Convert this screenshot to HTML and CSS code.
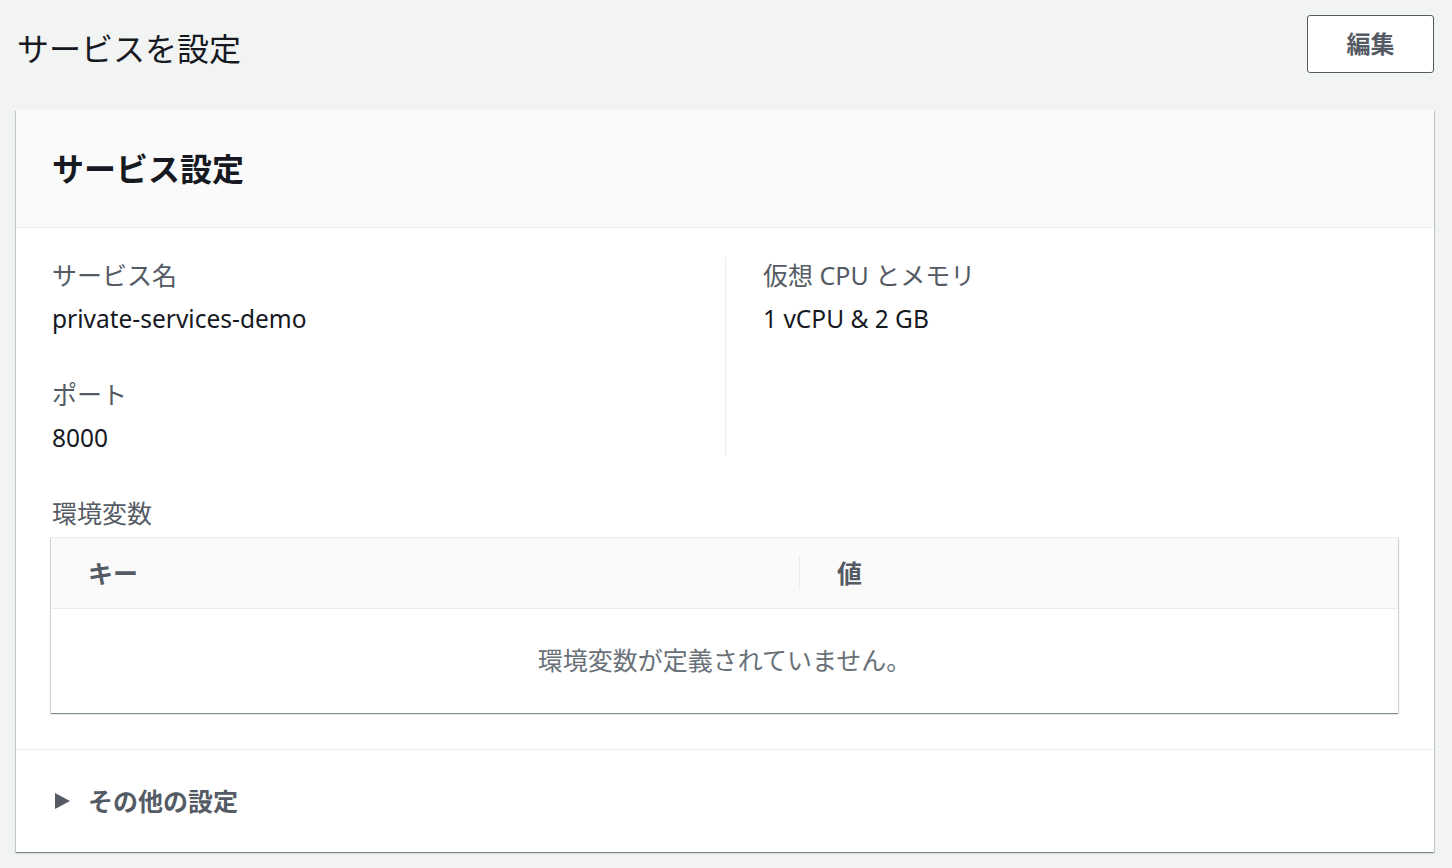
FILE: index.html
```html
<!DOCTYPE html>
<html lang="ja">
<head>
<meta charset="utf-8">
<title>サービスを設定</title>
<link rel="stylesheet" href="styles.css">
</head>
<body>
<div class="page-header">
  <h1 class="page-title">サービスを設定</h1>
  <button class="btn">編集</button>
</div>
<section class="card">
  <div class="card-header">
    <h2 class="card-title">サービス設定</h2>
  </div>
  <div class="card-body">
    <div class="columns">
      <div class="col">
        <div class="field">
          <div class="label">サービス名</div>
          <div class="value">private-services-demo</div>
        </div>
        <div class="field">
          <div class="label">ポート</div>
          <div class="value">8000</div>
        </div>
      </div>
      <div class="col col-right">
        <div class="field">
          <div class="label">仮想 CPU とメモリ</div>
          <div class="value">1 vCPU &amp; 2 GB</div>
        </div>
      </div>
    </div>
    <div class="env-label label">環境変数</div>
    <div class="table">
      <div class="thead">
        <div class="th th-key">キー</div>
        <div class="th th-val">値</div>
      </div>
      <div class="tbody">環境変数が定義されていません。</div>
    </div>
  </div>
  <div class="card-footer">
    <span class="caret"></span>
    <span class="more">その他の設定</span>
  </div>
</section>
</body>
</html>
```
FILE: styles.css
```css
* { box-sizing: border-box; }
html, body { margin: 0; padding: 0; }
body {
  background: #f2f3f3;
  font-family: "Noto Sans", "Noto Sans CJK JP", sans-serif;
  color: #16191f;
  width: 1452px;
  height: 868px;
  overflow: hidden;
}
.page-header {
  display: flex;
  justify-content: space-between;
  align-items: flex-start;
  padding: 15px 18px 0 17px;
  height: 110px;
}
.page-title {
  margin: 14px 0 0 0;
  font-size: 32px;
  font-weight: 400;
  line-height: 40px;
  color: #16191f;
}
.btn {
  width: 127px;
  height: 58px;
  background: #fff;
  border: 1px solid #545b64;
  border-radius: 3px;
  font-family: "Noto Sans", "Noto Sans CJK JP", sans-serif;
  font-size: 24px;
  font-weight: 700;
  color: #545b64;
  padding: 0 0 4px 0;
}
.card {
  margin: 0 18px 0 16px;
  background: #fff;
  box-shadow: 0 1px 1px 0 rgba(0,28,36,.3), 1px 1px 1px 0 rgba(0,28,36,.15), -1px 1px 1px 0 rgba(0,28,36,.15);
}
.card-header {
  height: 118px;
  background: #fafafa;
  border-bottom: 1px solid #eaeded;
  padding: 0 36px;
  display: flex;
  align-items: center;
}
.card-title {
  margin: 0;
  font-size: 32px;
  font-weight: 700;
  line-height: 40px;
  color: #16191f;
}
.card-body {
  padding: 29px 36px 36px;
  border-bottom: 1px solid #eaeded;
}
.columns {
  display: grid;
  grid-template-columns: 1fr 1fr;
}
.col-right {
  border-left: 1px solid #eaeded;
  padding-left: 37px;
}
.field + .field { margin-top: 39px; }
.label {
  font-size: 25px;
  line-height: 36px;
  color: #545b64;
}
.value {
  margin-top: 8px;
  font-size: 24.5px;
  line-height: 36px;
  color: #16191f;
}
.env-label { margin-top: 39px; }
.table {
  margin-top: 6px;
  margin-left: -1px;
  background: #fff;
  box-shadow: 0 1px 1px 0 rgba(0,28,36,.3), 1px 1px 1px 0 rgba(0,28,36,.15), -1px 1px 1px 0 rgba(0,28,36,.15);
}
.thead {
  height: 72px;
  background: #fafafa;
  border-top: 1px solid #eaeded;
  border-bottom: 1px solid #eaeded;
  display: flex;
  align-items: center;
}
.th {
  font-size: 25px;
  font-weight: 700;
  color: #545b64;
  line-height: 34px;
  padding-left: 37px;
}
.th-key {
  width: 749px;
  position: relative;
}
.th-key::after {
  content: "";
  position: absolute;
  right: 0;
  top: 0;
  height: 34px;
  border-right: 1px solid #eaeded;
}
.tbody {
  height: 104px;
  display: flex;
  align-items: center;
  justify-content: center;
  font-size: 25px;
  color: #687078;
  padding-bottom: 4px;
}
.card-footer {
  height: 102px;
  display: flex;
  align-items: center;
  padding-left: 39px;
}
.caret {
  width: 0;
  height: 0;
  border-top: 8px solid transparent;
  border-bottom: 8px solid transparent;
  border-left: 15px solid #545b64;
  margin-right: 18px;
}
.more {
  font-size: 25px;
  font-weight: 700;
  color: #545b64;
  line-height: 34px;
}
```
